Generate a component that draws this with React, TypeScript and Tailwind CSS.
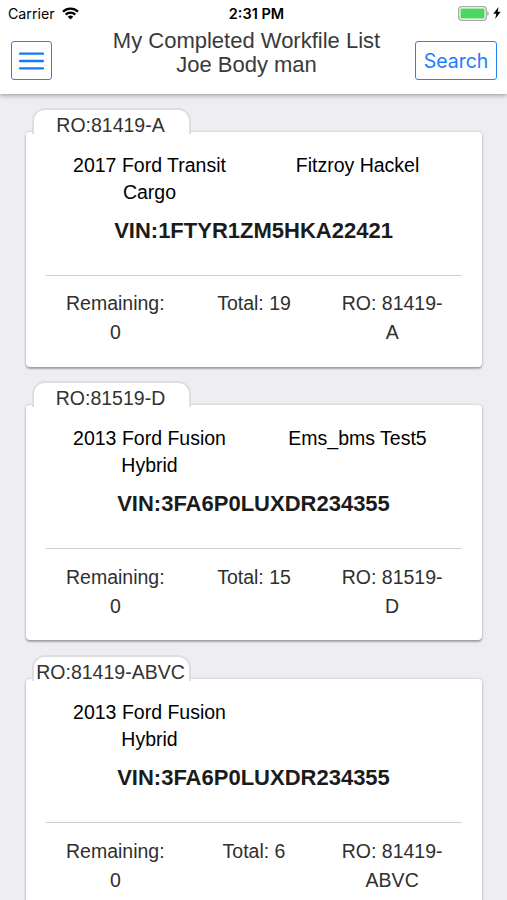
type Workfile = {
  ro: string;
  vehicle: string;
  owner: string;
  vin: string;
  remaining: number;
  total: number;
};

const workfiles: Workfile[] = [
  { ro: '81419-A', vehicle: '2017 Ford Transit Cargo', owner: 'Fitzroy Hackel', vin: '1FTYR1ZM5HKA22421', remaining: 0, total: 19 },
  { ro: '81519-D', vehicle: '2013 Ford Fusion Hybrid', owner: 'Ems_bms Test5', vin: '3FA6P0LUXDR234355', remaining: 0, total: 15 },
  { ro: '81419-ABVC', vehicle: '2013 Ford Fusion Hybrid', owner: '', vin: '3FA6P0LUXDR234355', remaining: 0, total: 6 },
];

function StatusBar() {
  return (
    <div className="grid h-7 grid-cols-3 items-center pr-1.5 pl-2 text-black">
      <div className="flex items-center gap-[7px] font-['Inter','Liberation_Sans',sans-serif] text-[14.2px]">
        <span>Carrier</span>
        <svg width="17" height="13" viewBox="0 0 17 13" fill="none" stroke="currentColor" strokeWidth="2.3">
          <path d="M1 4.8a10.6 10.6 0 0 1 15 0" />
          <path d="M3.7 7.6a6.8 6.8 0 0 1 9.6 0" />
          <path d="M5.7 9.8a4 4 0 0 1 5.6 0L8.5 12.6z" fill="currentColor" stroke="none" />
        </svg>
      </div>
      <div className="pl-1 text-center font-['Inter','Liberation_Sans',sans-serif] text-[14.5px] font-semibold">2:31 PM</div>
      <div className="flex items-center justify-end gap-1 pb-0.5">
        <svg width="32" height="15" viewBox="0 0 32 15">
          <rect x="1.7" y="0.7" width="27.6" height="13.6" rx="3" fill="#fff" stroke="#a9a9a9" strokeWidth="1.3" />
          <rect x="3.5" y="2.5" width="24" height="10" rx="1" fill="#4cd760" />
          <path d="M30.3 5v5q1.5-.8 1.5-2.5T30.3 5z" fill="#a9a9a9" />
        </svg>
        <svg width="8" height="12" viewBox="0 0 8 12">
          <path d="M5.5 0 0.3 6.8h3L2.2 12 7.7 4.8h-3z" fill="#000" />
        </svg>
      </div>
    </div>
  );
}

function Header() {
  return (
    <header className="relative z-10 h-[94px] bg-white shadow-[0_1px_5px_rgba(0,0,0,0.4)]">
      <StatusBar />
      <div className="flex justify-between pr-2.5 pl-[11px]">
        <button aria-label="Menu" className="mt-[13px] flex h-[39px] w-[41px] items-center justify-center rounded-[3px] border-[1.5px] border-[#2583f8]">
          <svg width="25" height="18" viewBox="0 0 25 18" stroke="#1479fb" strokeWidth="2.4" strokeLinecap="round">
            <path d="M1.1 1.6h22.8M1.1 9h22.8M1.1 16.4h22.8" />
          </svg>
        </button>
        <h1 className="ml-[26px] pt-px text-center text-[22px] leading-6 text-[#3a3a3c]">
          My Completed Workfile List
          <br />
          Joe Body man
        </h1>
        <button className="mt-[13px] h-[39px] w-[82px] rounded-[3px] border-[1.5px] border-[#2583f8] pt-0.5 font-['Inter','Liberation_Sans',sans-serif] text-[19.5px] text-[#1c7efb]">
          Search
        </button>
      </div>
    </header>
  );
}

function WorkfileCard({ file }: { file: Workfile }) {
  return (
    <article className="mb-[14.8px]">
      {/* the tab sits on the card's top edge and hides it */}
      <div className="relative z-[1] -mb-0.5 ml-1.5 h-[26px] w-[159px] rounded-t-[13px] border-2 border-b-0 border-[#dedee0] bg-white text-center text-[19.5px] leading-[30px] whitespace-nowrap text-[#333]">
        <span className="-ml-0.5">{`RO:${file.ro}`}</span>
      </div>
      <div className="h-[235px] rounded-[4px] bg-white px-5 shadow-[0_2px_2px_rgba(0,0,0,0.28),0_0_3px_rgba(0,0,0,0.2)]">
        <div className="grid h-[81px] grid-cols-2 pt-5 text-center text-[19.5px] leading-[27px] text-black">
          <p className="pr-[17px] pl-4">{file.vehicle}</p>
          <p className="pr-[17px] pl-4">{file.owner}</p>
        </div>
        <p className="h-[62px] pr-px text-center text-[22px] leading-9 font-bold text-[#1b1b1b]">{`VIN:${file.vin}`}</p>
        <div className="grid grid-cols-3 border-t border-[#cfcfcf] pt-[13.5px] text-center text-[19.5px] leading-[29.3px] text-[#2f2f2f]">
          <p className="px-4">{`Remaining: ${file.remaining}`}</p>
          <p className="px-4">{`Total: ${file.total}`}</p>
          <p className="pr-[17px] pl-4">{`RO: ${file.ro}`}</p>
        </div>
      </div>
    </article>
  );
}

export default function App() {
  return (
    <div className="h-[900px] w-[507px] overflow-hidden bg-[#eeeef2] font-['Liberation_Sans',Arial,sans-serif]">
      <Header />
      <main className="pt-[13.7px] pr-[25px] pl-[26px]">
        {workfiles.map((file) => (
          <WorkfileCard key={file.ro} file={file} />
        ))}
      </main>
    </div>
  );
}
